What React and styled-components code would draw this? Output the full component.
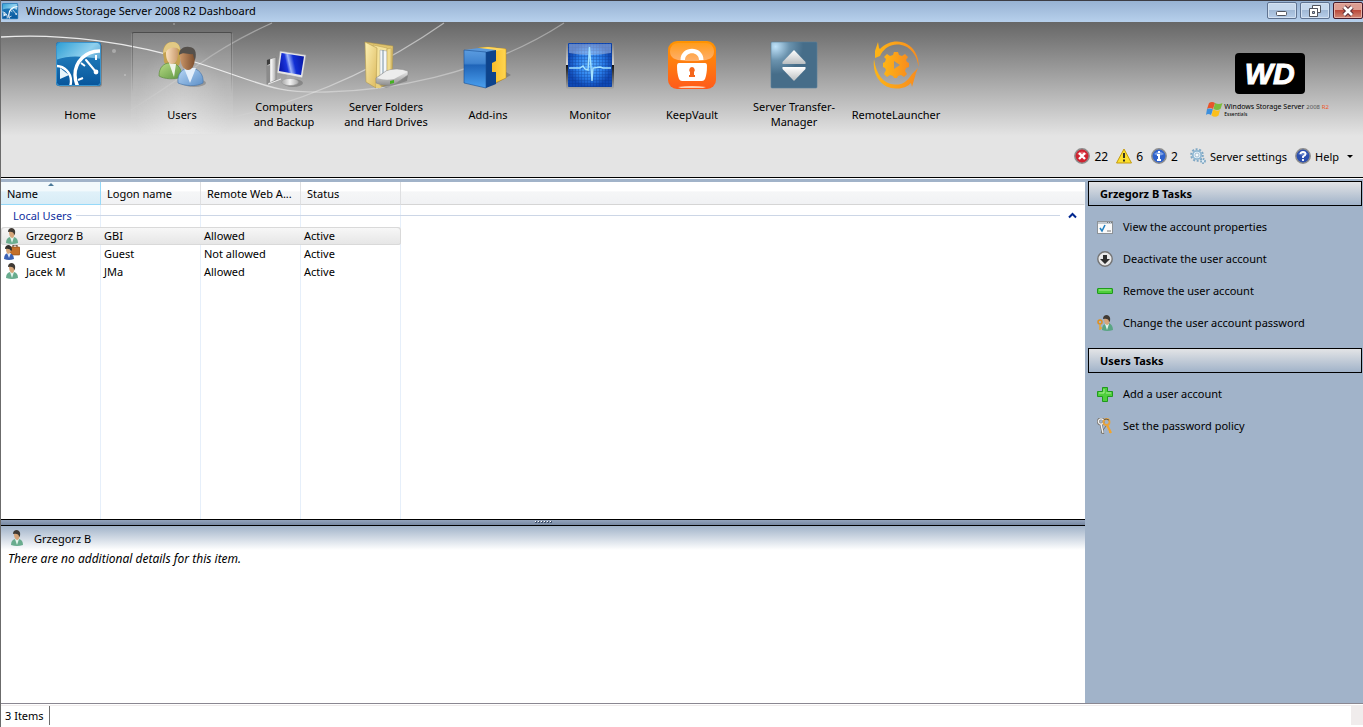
//dashboard
import React, { useState } from "react";
import styled, { createGlobalStyle, css } from "styled-components";

// Toolbar icons
const HomeIcon = () => (
  <svg viewBox="0 0 48 48" aria-hidden="true">
    <defs>
      <linearGradient id="homeTop" x1="0" y1="0" x2="1" y2="1">
        <stop offset="0" stopColor="#2f9fd4" />
        <stop offset="0.45" stopColor="#8fd0ee" />
        <stop offset="1" stopColor="#1c6fb0" />
      </linearGradient>
      <linearGradient id="homeLow" x1="0" y1="0" x2="0" y2="1">
        <stop offset="0" stopColor="#1e78b8" />
        <stop offset="1" stopColor="#06549a" />
      </linearGradient>
      <clipPath id="homeClip">
        <rect x="1" y="2" width="43" height="42" rx="2" />
      </clipPath>
    </defs>
    <rect x="2" y="3" width="44" height="43" rx="3" fill="#000" opacity="0.2" />
    <rect x="0" y="1" width="45" height="44" rx="3" fill="#1568ac" />
    <g clipPath="url(#homeClip)">
      <rect x="1" y="2" width="43" height="42" fill="url(#homeTop)" />
      <path d="M0 19C12 14 25 15 45 18V46H0Z" fill="url(#homeLow)" />
      <circle cx="43" cy="34" r="24" fill="none" stroke="#fff" strokeWidth="3.4" />
      <path d="M25 22l4 3M40 14v5M22 39l5-2" stroke="#fff" strokeWidth="2" />
      <path d="M30 19L40 31" stroke="#fff" strokeWidth="2" strokeLinecap="round" />
      <circle cx="40" cy="31" r="2.4" fill="#fff" />
      <circle cx="0" cy="40" r="15" fill="none" stroke="#fff" strokeWidth="2.4" />
      <path d="M4 27L13 34L4 38Z" fill="#e8f5fc" />
    </g>
    <rect x="0.5" y="1.5" width="44" height="43" rx="3" fill="none" stroke="#3b93cb" />
  </svg>
);

const UsersIcon = () => (
  <svg viewBox="0 0 48 48" aria-hidden="true">
    <defs>
      <linearGradient id="greenTop" x1="0" y1="0" x2="1" y2="1">
        <stop offset="0" stopColor="#b9dd86" />
        <stop offset="1" stopColor="#5d9440" />
      </linearGradient>
      <linearGradient id="blueTop" x1="0" y1="0" x2="1" y2="1">
        <stop offset="0" stopColor="#b9d8f6" />
        <stop offset="1" stopColor="#5c8fc8" />
      </linearGradient>
      <linearGradient id="fairSkin" x1="0" y1="0" x2="1" y2="0">
        <stop offset="0" stopColor="#fbe0bd" />
        <stop offset="1" stopColor="#c99b6e" />
      </linearGradient>
      <linearGradient id="darkSkin" x1="0" y1="0" x2="1" y2="0">
        <stop offset="0" stopColor="#c99568" />
        <stop offset="1" stopColor="#7a4c2c" />
      </linearGradient>
    </defs>
    <path d="M6 18C3 6 8 1 14 1C22 1 24 7 22 20Q22 25 19 25L9 24Q5 22 6 18Z" fill="#c4a14f" />
    <path d="M1 35C1 26 6 22 12 22C20 22 24 28 24 36C16 39 6 38 1 35Z" fill="url(#greenTop)" stroke="#5f8d40" strokeWidth="0.7" />
    <path d="M11 22L16 36L18 23Z" fill="#eef4e8" />
    <path d="M8 12C8 6 10 5 14 5C18 5 20 7 20 12C20 18 18 23 14 23C10 23 8 18 8 12Z" fill="url(#fairSkin)" />
    <path d="M5 12C6 4 10 1 15 1C19 1 22 4 22 9C17 5 11 6 8 11Z" fill="#e2c984" />
    <ellipse cx="36" cy="42" rx="12" ry="4" fill="#000" opacity="0.2" />
    <path d="M20 42C19 33 24 27 32 27C41 27 46 34 45 42C38 46 27 45 20 42Z" fill="url(#blueTop)" stroke="#4a78ac" strokeWidth="0.7" />
    <path d="M26 27L32 42L38 27Z" fill="#e4effa" />
    <path d="M22 15C22 9 26 7 31 7C36 7 38 11 37 18C36 25 34 29 30 29C25 29 22 22 22 15Z" fill="url(#darkSkin)" />
    <path d="M21 14C21 8 26 5 31 6C37 6 39 11 37 19Q36 18 35 13C30 14 26 10 21 14Z" fill="#55504b" />
  </svg>
);

const ComputersIcon = () => (
  <svg viewBox="0 0 48 48" aria-hidden="true">
    <defs>
      <linearGradient id="screenBlue" x1="0" y1="0.6" x2="1" y2="0.4">
        <stop offset="0" stopColor="#0917a8" />
        <stop offset="0.3" stopColor="#1a35dc" />
        <stop offset="0.42" stopColor="#9db4fa" />
        <stop offset="0.62" stopColor="#1230d4" />
        <stop offset="1" stopColor="#0818a5" />
      </linearGradient>
      <linearGradient id="pcGrey" x1="0" y1="0" x2="1" y2="0">
        <stop offset="0" stopColor="#a6a6a6" />
        <stop offset="0.5" stopColor="#f2f2f2" />
        <stop offset="1" stopColor="#a9a9a9" />
      </linearGradient>
    </defs>
    <path d="M7 19L16 16V39L7 43Z" fill="url(#pcGrey)" stroke="#777" strokeWidth="0.6" />
    <path d="M7 19L10 18V23L7 24Z" fill="#3c3c3c" />
    <path d="M7 25L10 24V41L7 43Z" fill="#8b8b8b" />
    <path d="M8 43L21 38" stroke="#eee" />
    <ellipse cx="33" cy="42" rx="10" ry="4" fill="#000" opacity="0.2" />
    <path d="M27 33L35 35L34 42H26Z" fill="#aaa" />
    <ellipse cx="30" cy="41" rx="8.5" ry="3.6" fill="url(#pcGrey)" stroke="#999" strokeWidth="0.6" />
    <path d="M20 10L46 14L42.5 37L17 32Z" fill="#e6e6e6" stroke="#999" strokeWidth="0.6" />
    <path d="M21.5 12L44 15.5L41 34L19 30Z" fill="url(#screenBlue)" />
  </svg>
);

const FoldersIcon = () => (
  <svg viewBox="0 0 48 48" aria-hidden="true">
    <defs>
      <linearGradient id="folderTan" x1="0" y1="0" x2="1" y2="1">
        <stop offset="0" stopColor="#fdf1b4" />
        <stop offset="1" stopColor="#dcb95d" />
      </linearGradient>
      <linearGradient id="driveGrey" x1="0" y1="0" x2="0" y2="1">
        <stop offset="0" stopColor="#f7f7f7" />
        <stop offset="1" stopColor="#8f8f8f" />
      </linearGradient>
    </defs>
    <path d="M3 1L31 5L30 42L16 47L13 40Z" fill="#e0c46e" stroke="#a98f45" strokeWidth="0.5" />
    <path d="M11 4L25 7V42L15 44Z" fill="#f6e39b" stroke="#b49a4e" strokeWidth="0.5" />
    <path d="M18 9L25 10V34L18 36Z" fill="#f4f7f9" stroke="#9aa0a5" strokeWidth="0.5" />
    <path d="M21 9V38" stroke="#77909f" strokeWidth="1" />
    <path d="M25 8L29 7V36L25 38Z" fill="#f1dc8d" stroke="#b49a4e" strokeWidth="0.5" />
    <path d="M3 1L15 7L14 47L4 41Z" fill="url(#folderTan)" stroke="#b49a4e" strokeWidth="0.6" />
    <path d="M14 47L19 47L18 40L14 39Z" fill="#e6ce7c" />
    <path d="M17 44L46 34L45 40L24 47Z" fill="#000" opacity="0.2" />
    <path d="M14 37L24 30Q35 26 46 30V34L33 43Q23 46 14 42Z" fill="url(#driveGrey)" stroke="#8a8a8a" strokeWidth="0.6" />
    <path d="M15 37L25 30Q35 27 45 31L32 38Q23 40 15 37Z" fill="#ededed" />
    <path d="M28 40L32 39V42L28 43Z" fill="#45b022" />
  </svg>
);

const AddinsIcon = () => (
  <svg viewBox="0 0 48 48" aria-hidden="true">
    <defs>
      <linearGradient id="cubeFront" x1="0" y1="0" x2="0" y2="1">
        <stop offset="0" stopColor="#5b9ce0" />
        <stop offset="0.35" stopColor="#3f83cf" />
        <stop offset="0.4" stopColor="#1f64b8" />
        <stop offset="1" stopColor="#4ba0ef" />
      </linearGradient>
      <linearGradient id="cubeGold" x1="0" y1="0" x2="1" y2="0">
        <stop offset="0" stopColor="#f2a400" />
        <stop offset="1" stopColor="#ffd651" />
      </linearGradient>
    </defs>
    <path d="M28 45L47 34L42 31Z" fill="#000" opacity="0.2" />
    <path d="M14 7L24 6L42 8V37L31 42L26 30Z" fill="url(#cubeGold)" stroke="#c58a08" strokeWidth="0.5" />
    <path d="M14 7L24 6L42 8L32 10Z" fill="#ffd75e" />
    <path d="M0 9L15 7L32 9L22 12Z" fill="#5b99dc" />
    <path d="M22 11L32 9V20L28 22V31L32 31V43L22 47Z" fill="#0d438c" />
    <path d="M0 9L22 11V47L0 42Z" fill="url(#cubeFront)" stroke="#174f93" strokeWidth="0.6" />
  </svg>
);

const MonitorIcon = () => (
  <svg viewBox="0 0 48 48" aria-hidden="true">
    <defs>
      <radialGradient id="scope">
        <stop offset="0" stopColor="#5cb2ff" />
        <stop offset="0.6" stopColor="#2a7eea" />
        <stop offset="1" stopColor="#0f48b4" />
      </radialGradient>
      <linearGradient id="scopeFrame" x1="0" y1="0" x2="0" y2="1">
        <stop offset="0" stopColor="#777" />
        <stop offset="0.5" stopColor="#d8d8d8" />
        <stop offset="0.5" stopColor="#111" />
        <stop offset="1" stopColor="#aaa" />
      </linearGradient>
      <pattern id="scopeGrid" width="3" height="3" patternUnits="userSpaceOnUse">
        <path d="M0 0H3M0 0V3" stroke="#0a2f80" strokeWidth="1" opacity="0.5" />
      </pattern>
    </defs>
    <rect width="48" height="48" rx="2" fill="url(#scopeFrame)" />
    <rect x="2" y="2" width="44" height="44" rx="1" fill="url(#scope)" />
    <rect x="2" y="2" width="44" height="44" fill="url(#scopeGrid)" />
    <path d="M3 3H45V12Q24 16 3 12Z" fill="#fff" opacity="0.35" />
    <path d="M3 27H14L17 25L19 28L22 29L23.500 6L26 40L27 27L34 26L37 27H45" fill="none" stroke="#a5e3ff" strokeWidth="1.4" />
  </svg>
);

const VaultIcon = () => (
  <svg viewBox="0 0 48 48" aria-hidden="true">
    <defs>
      <linearGradient id="vaultBg" x1="0" y1="0" x2="0" y2="1">
        <stop offset="0" stopColor="#ff9400" />
        <stop offset="0.5" stopColor="#ff7a10" />
        <stop offset="1" stopColor="#ff5a1a" />
      </linearGradient>
      <linearGradient id="vaultShine" x1="0" y1="0" x2="0" y2="1">
        <stop offset="0" stopColor="#fff" stopOpacity="0.1" />
        <stop offset="1" stopColor="#fff" stopOpacity="0.4" />
      </linearGradient>
    </defs>
    <rect width="48" height="48" rx="9" fill="url(#vaultBg)" />
    <path d="M2 10Q3 2 10 2H38Q45 2 46 10C46 18 40 20 24 20S2 18 2 10Z" fill="url(#vaultShine)" />
    <path d="M12.500 19C12.500 4 35.500 4 35.500 19H31C31 10 17 10 17 19Z" fill="#fff" />
    <path d="M11 22H37Q39 22 39 25Q39 33 37 38Q36 40 34 40H14Q12 40 11 38Q9 33 9 25Q9 22 11 22Z" fill="#fff" />
    <path d="M24 26A3 3 0 0 1 26 31V34H27V36H21V34H22V31A3 3 0 0 1 24 26Z" fill="#f4661c" />
    <path d="M10 46Q24 44 38 46L35 47H13Z" fill="#ffd0b0" />
  </svg>
);

const TransferIcon = () => (
  <svg viewBox="0 0 48 48" aria-hidden="true">
    <defs>
      <radialGradient id="transferBg" cx="0.1" cy="0.1" r="0.6">
        <stop offset="0" stopColor="#c0e3fa" />
        <stop offset="0.5" stopColor="#6b93ae" />
        <stop offset="1" stopColor="#466d89" />
      </radialGradient>
      <linearGradient id="arrowSilver" x1="0" y1="0" x2="0" y2="1">
        <stop offset="0" stopColor="#fff" />
        <stop offset="1" stopColor="#b9bec1" />
      </linearGradient>
    </defs>
    <rect x="1" y="1" width="46" height="46" rx="1" fill="url(#transferBg)" stroke="#57809c" strokeWidth="0.6" />
    <path d="M24 9L35.500 21V23H12.500V21Z" fill="url(#arrowSilver)" />
    <path d="M12.500 26H35.500V28L24 40L12.500 28Z" fill="url(#arrowSilver)" />
  </svg>
);

const RemoteIcon = () => (
  <svg viewBox="0 0 48 48" aria-hidden="true">
    <defs>
      <linearGradient id="remoteGold" x1="0" y1="0" x2="1" y2="0">
        <stop offset="0" stopColor="#feb515" />
        <stop offset="1" stopColor="#f88c1e" />
      </linearGradient>
    </defs>
    <g fill="url(#remoteGold)">
      <path d="M8 8C18 -3 36 -2 43 11C46 16 47 21 46.500 26C45 13 37 3.500 25 3.500C18 3.500 13 7 9 13L8 15L3 17L3 10L6 1L7 7Z" />
      <path d="M2 18C0 36 11 48 25 47.500C32 47.500 36 45 39 42L40 46L44 32L46 27L40 33C35 41 30 44 23 43.500C11 43 4 33 2 18Z" />
      <path
        fillRule="evenodd"
        d="M22 11H26L27 14L30 15L33 13L36 16L34 19L35 21L37 22V26L34 27L33 30L35 33L32 36L29 34L26 35L25 37H22L21 35L18 34L15 36L12 33L14 29L13 27L11 26V22L13 21L14 18L12 16L15 13L18 15L21 14ZM22 20V28L28 24Z"
      />
    </g>
  </svg>
);

// Small icons
const PersonIcon = () => (
  <svg viewBox="0 0 16 16" aria-hidden="true">
    <path d="M2 15Q2 10 6 9H10Q14 10 14 15Q8 17 2 15Z" fill="#69ac8e" />
    <path d="M6 9L8 15L10 9Z" fill="#e3f4ec" />
    <path d="M5 4Q5 1 8 1Q11 1 11 5Q10 10 8 10Q5 9 5 4Z" fill="#d6a67a" />
    <path d="M4 4Q4 0 8 0Q12 1 11 6L10 7Q10 3 4 4Z" fill="#3f3a35" />
  </svg>
);

const GuestIcon = () => (
  <svg viewBox="0 0 16 16" aria-hidden="true">
    <path d="M9 2V0H13V2" fill="none" stroke="#4b2b12" />
    <rect x="6" y="2" width="10" height="8" rx="1" fill="#c4702a" stroke="#8a4613" strokeWidth="0.6" />
    <path d="M0 14Q0 8 5 8Q10 9 10 14Q5 16 0 14Z" fill="#3b62b5" />
    <path d="M3 8L5 13L7 8Z" fill="#dfe8f8" />
    <path d="M2 4Q2 1 5 1Q8 2 7 6Q6 9 4 9Q2 8 2 4Z" fill="#d6a67a" />
    <path d="M1 4Q1 0 5 0Q8 1 8 5L7 6Q6 3 1 4Z" fill="#33302c" />
  </svg>
);

const KeyIcon = () => (
  <svg viewBox="0 0 16 16" aria-hidden="true">
    <path d="M4 6L6 16M6 13H4" stroke="#77736c" strokeWidth="2.600" fill="none" />
    <path d="M9 8L4 15" stroke="#77736c" strokeWidth="1" />
    <circle cx="4" cy="3.500" r="2.700" fill="none" stroke="#77736c" strokeWidth="2.600" />
    <circle cx="4" cy="3.500" r="2.600" fill="none" stroke="#f2f2f2" strokeWidth="1.400" />
    <path d="M4 6L6 15" stroke="#efefef" strokeWidth="1.400" fill="none" />
    <path d="M10 7L14 15M12 14H14" stroke="#f2a52c" strokeWidth="2.200" fill="none" />
    <circle cx="9.500" cy="4" r="3" fill="none" stroke="#e8a33b" strokeWidth="1.800" />
    <path d="M7 1.500Q9 0.500 12 2" fill="none" stroke="#5f5a50" />
  </svg>
);

const PasswordIcon = () => (
  <svg viewBox="0 0 16 16" aria-hidden="true">
    <path d="M5 15Q5 9 9 9L12 8Q16 10 16 15Q10 17 5 15Z" fill="#5aa584" />
    <path d="M8 9L10 15L12 9Z" fill="#e3f4ec" />
    <path d="M7 4Q7 1 10 1Q13 1 13 5Q12 10 10 10Q7 9 7 4Z" fill="#d6a67a" />
    <path d="M6 4Q6 0 10 0Q14 1 13 6L12 7Q12 3 6 4Z" fill="#3f3a35" />
    <circle cx="3" cy="7" r="2" fill="none" stroke="#e08f1e" strokeWidth="1.500" />
    <path d="M3 9V15M3 13H5" stroke="#e9a52e" strokeWidth="1.400" />
  </svg>
);

const PropertiesIcon = () => (
  <svg viewBox="0 0 16 16" aria-hidden="true">
    <rect x="0.500" y="2.500" width="15" height="12" fill="#fafafa" stroke="#8d9297" />
    <path d="M1 4H15" stroke="#c3cad0" strokeWidth="2" />
    <path d="M10 3.500H15" stroke="#6e7880" strokeDasharray="1 1" />
    <path d="M3 9L5 12L8 6" fill="none" stroke="#1f7fc0" strokeWidth="1.600" />
    <path d="M10 12H14" stroke="#777" />
  </svg>
);

const DeactivateIcon = () => (
  <svg viewBox="0 0 16 16" aria-hidden="true">
    <circle cx="8" cy="8" r="7.200" fill="#e9e9e9" stroke="#747474" strokeWidth="1.400" />
    <path d="M6 4H10V8H13L8 13L3 8H6Z" fill="#2d2d2d" />
  </svg>
);

const RemoveIcon = () => (
  <svg viewBox="0 0 16 16" aria-hidden="true">
    <rect x="0.500" y="5.500" width="15" height="5" rx="0.500" fill="#4fcf3c" stroke="#1f9a1c" />
    <path d="M2 7H14" stroke="#a9f093" />
  </svg>
);

const AddIcon = () => (
  <svg viewBox="0 0 16 16" aria-hidden="true">
    <path d="M5.500 1.500H10.500V5.500H15.500V10.500H10.500V15.500H5.500V10.500H0.500V5.500H5.500Z" fill="#4fcf3c" stroke="#1f9a1c" />
    <path d="M7 3V7H2M9 7H14" stroke="#a9f093" fill="none" />
  </svg>
);

const ErrorIcon = () => (
  <svg viewBox="0 0 16 16" aria-hidden="true">
    <circle cx="8" cy="8" r="7.200" fill="#cf2330" stroke="#8e8e8e" strokeWidth="1.500" />
    <path d="M3 6Q8 1 13 6Q8 9 3 6Z" fill="#f08a8e" opacity="0.6" />
    <path d="M5 5L11 11M11 5L5 11" stroke="#fff" strokeWidth="2.400" />
  </svg>
);

const WarningIcon = () => (
  <svg viewBox="0 0 16 16" aria-hidden="true">
    <path d="M8 1L15.500 15H0.500Z" fill="#fde02c" stroke="#c39a10" strokeLinejoin="round" />
    <path d="M8 5V10M8 11.500V13.500" stroke="#222" strokeWidth="1.800" />
  </svg>
);

const InfoIcon = () => (
  <svg viewBox="0 0 16 16" aria-hidden="true">
    <circle cx="8" cy="8" r="7.200" fill="#2f62cc" stroke="#8e8e8e" strokeWidth="1.500" />
    <path d="M3 6Q8 1 13 6Q8 9 3 6Z" fill="#9dbaf0" opacity="0.7" />
    <path d="M8 3V5M6 7H8V12M6 12H10" stroke="#fff" strokeWidth="2" fill="none" />
  </svg>
);

const GearIcon = () => (
  <svg viewBox="0 0 16 16" aria-hidden="true">
    <circle cx="7" cy="7" r="5.800" fill="none" stroke="#7ea7c4" strokeWidth="2" strokeDasharray="2 1.600" />
    <circle cx="7" cy="7" r="4.200" fill="#e6f2fa" stroke="#8fb7d2" strokeWidth="1.800" />
    <circle cx="7" cy="7" r="2" fill="#f5fafc" stroke="#7b9cb4" strokeWidth="0.600" />
    <circle cx="13" cy="13" r="2" fill="#e6f2fa" stroke="#7ea7c4" strokeWidth="1.800" strokeDasharray="1.400 0.700" />
  </svg>
);

const HelpIcon = () => (
  <svg viewBox="0 0 16 16" aria-hidden="true">
    <circle cx="8" cy="8" r="7.200" fill="#2c4fae" stroke="#8e8e8e" strokeWidth="1.500" />
    <path d="M3 6Q8 1 13 6Q8 9 3 6Z" fill="#8fa8e0" opacity="0.6" />
    <path d="M5.500 6Q5.500 4 8 4T10.500 6Q10.500 7.500 8 8.500V10M8 11V13" stroke="#fff" strokeWidth="1.800" fill="none" />
  </svg>
);

const WindowsFlag = () => (
  <svg width="17" height="16" viewBox="0 0 17 16" aria-hidden="true">
    <path d="M3 2Q6 0 9 2L7 8Q4 6 1 8Z" fill="#e8542a" />
    <path d="M9 2Q13 4 16.500 2L14.500 8Q11 10 7.500 8Z" fill="#7cbb3c" />
    <path d="M1 8Q4 7 7 8.500L5 14Q2 12 0 14Z" fill="#3d8fdc" />
    <path d="M7 8.500Q11 10.500 14 9L12.500 14.500Q9 17 5.500 14.500Z" fill="#fbbf1c" />
  </svg>
);

const Swoosh = () => (
  <SwooshArt width="600" height="155" viewBox="0 0 600 155" aria-hidden="true">
    <defs>
      <linearGradient id="rayOne" gradientUnits="userSpaceOnUse" x1="120" y1="0" x2="271" y2="0">
        <stop offset="0" stopColor="#fff" stopOpacity="0" />
        <stop offset="1" stopColor="#fff" stopOpacity="0.4" />
      </linearGradient>
      <linearGradient id="rayTwo" gradientUnits="userSpaceOnUse" x1="228" y1="0" x2="443" y2="0">
        <stop offset="0" stopColor="#fff" stopOpacity="0" />
        <stop offset="0.6" stopColor="#fff" stopOpacity="0.5" />
        <stop offset="1" stopColor="#fff" stopOpacity="0.5" />
      </linearGradient>
      <linearGradient id="wave" gradientUnits="userSpaceOnUse" x1="0" y1="0" x2="563" y2="0">
        <stop offset="0" stopColor="#fff" stopOpacity="0.85" />
        <stop offset="0.42" stopColor="#fff" stopOpacity="0.8" />
        <stop offset="0.55" stopColor="#fff" stopOpacity="0.35" />
        <stop offset="1" stopColor="#fff" stopOpacity="0.35" />
      </linearGradient>
    </defs>
    <g fill="none" strokeWidth="1.300">
      <path d="M0 15C60 11 130 20 197 41S270 71 325 70S480 55 563 1" stroke="url(#wave)" />
      <path d="M125 91Q165 66 197 43T271 1" stroke="url(#rayOne)" />
      <path d="M228 96C300 80 370 52 443 1" stroke="url(#rayTwo)" />
    </g>
    <g fill="#fff" opacity="0.3">
      <circle cx="113" cy="29" r="2" />
      <circle cx="173" cy="2" r="1" />
      <circle cx="124" cy="53" r="1" />
    </g>
  </SwooshArt>
);

const tabs = [
  { label: "Home", icon: HomeIcon },
  { label: "Users", icon: UsersIcon },
  { label: "Computers\nand Backup", icon: ComputersIcon },
  { label: "Server Folders\nand Hard Drives", icon: FoldersIcon },
  { label: "Add-ins", icon: AddinsIcon },
  { label: "Monitor", icon: MonitorIcon },
  { label: "KeepVault", icon: VaultIcon },
  { label: "Server Transfer-\nManager", icon: TransferIcon },
  { label: "RemoteLauncher", icon: RemoteIcon },
];

const users = [
  { name: "Grzegorz B", logon: "GBI", access: "Allowed", status: "Active", icon: PersonIcon },
  { name: "Guest", logon: "Guest", access: "Not allowed", status: "Active", icon: GuestIcon },
  { name: "Jacek M", logon: "JMa", access: "Allowed", status: "Active", icon: PersonIcon },
];

const accountTasks = [
  { label: "View the account properties", icon: PropertiesIcon },
  { label: "Deactivate the user account", icon: DeactivateIcon },
  { label: "Remove the user account", icon: RemoveIcon },
  { label: "Change the user account password", icon: PasswordIcon },
];

const usersTasks = [
  { label: "Add a user account", icon: AddIcon },
  { label: "Set the password policy", icon: KeyIcon },
];

function TaskGroup({ title, tasks }) {
  return (
    <section>
      <TaskTitle>{title}</TaskTitle>
      <TaskList>
        {tasks.map(({ label, icon: Icon }) => (
          <li key={label}>
            <TaskButton type="button">
              <SmallIcon>
                <Icon />
              </SmallIcon>
              <TaskLabel>{label}</TaskLabel>
            </TaskButton>
          </li>
        ))}
      </TaskList>
    </section>
  );
}

export default function App() {
  const [activeTab, setActiveTab] = useState("Users");
  const [selected, setSelected] = useState(0);
  const [open, setOpen] = useState(true);
  const current = users[selected];

  return (
    <Window>
      <GlobalStyle />
      <TitleBar>
        <TitleIcon>
          <HomeIcon />
        </TitleIcon>
        <Title>Windows Storage Server 2008 R2 Dashboard</Title>
        <WindowButtons>
          <WindowButton type="button" aria-label="Minimize">
            <svg width="14" height="12" viewBox="0 0 14 12">
              <rect x="1.500" y="6.500" width="10" height="4" rx="1" fill="#fff" stroke="#51555f" />
            </svg>
          </WindowButton>
          <WindowButton type="button" aria-label="Restore">
            <svg width="14" height="12" viewBox="0 0 14 12">
              <path d="M4.500 0.500H12.500V7.500H9.500V3.500H4.500Z" fill="#fff" stroke="#51555f" />
              <path d="M1.500 3.500H9.500V11.500H1.500ZM4.500 6.500V8.500H6.500V6.500Z" fill="#fff" fillRule="evenodd" stroke="#51555f" />
            </svg>
          </WindowButton>
          <WindowButton type="button" aria-label="Close" $close>
            <svg width="14" height="12" viewBox="0 0 14 12">
              <path d="M3 2L11 10M11 2L3 10" stroke="#5b2b33" strokeWidth="4.600" />
              <path d="M3 2L11 10M11 2L3 10" stroke="#fff" strokeWidth="2.600" />
            </svg>
          </WindowButton>
        </WindowButtons>
      </TitleBar>

      <Header>
        <Swoosh />
        <TopRow>
          <Tabs>
            {tabs.map(({ label, icon: Icon }) => (
              <Tab
                key={label}
                type="button"
                $active={label === activeTab}
                onClick={() => setActiveTab(label)}
              >
                <TabIcon>
                  <Icon />
                </TabIcon>
                <TabLabel>{label}</TabLabel>
              </Tab>
            ))}
          </Tabs>
          <Brand>
            <WdLogo>WD</WdLogo>
            <Product>
              <WindowsFlag />
              <div>
                <ProductName>
                  Windows Storage Server <small>2008</small> <em>R2</em>
                </ProductName>
                <Edition>Essentials</Edition>
              </div>
            </Product>
          </Brand>
        </TopRow>
        <Alerts>
          <AlertGroup>
            <AlertButton type="button" aria-label="Errors: 22">
              <SmallIcon><ErrorIcon /></SmallIcon>22
            </AlertButton>
            <AlertButton type="button" aria-label="Warnings: 6">
              <SmallIcon><WarningIcon /></SmallIcon>6
            </AlertButton>
            <AlertButton type="button" aria-label="Information: 2">
              <SmallIcon><InfoIcon /></SmallIcon>2
            </AlertButton>
          </AlertGroup>
          <AlertButton type="button">
            <SmallIcon><GearIcon /></SmallIcon>Server settings
          </AlertButton>
          <AlertButton type="button">
            <SmallIcon><HelpIcon /></SmallIcon>Help
            <Caret />
          </AlertButton>
        </Alerts>
      </Header>

      <Main>
        <Content>
          <ListPane>
            <UserTable>
              <colgroup>
                <col className="data" />
                <col className="data" />
                <col className="data" />
                <col className="data" />
                <col />
              </colgroup>
              <thead>
                <tr>
                  <HeadCell $sorted aria-sort="ascending">Name</HeadCell>
                  <HeadCell>Logon name</HeadCell>
                  <HeadCell>Remote Web A...</HeadCell>
                  <HeadCell>Status</HeadCell>
                  <HeadCell as="td" $last />
                </tr>
              </thead>
              <tbody>
                <tr>
                  <GroupCell colSpan={5}>
                    <GroupButton type="button" aria-expanded={open} onClick={() => setOpen(!open)}>
                      Local Users
                      <GroupLine />
                      <svg width="9" height="7" viewBox="0 0 9 7" aria-hidden="true">
                        <path d="M1 5.500L4.500 2L8 5.500" fill="none" stroke="#00268f" strokeWidth="2" />
                      </svg>
                    </GroupButton>
                  </GroupCell>
                </tr>
                {open &&
                  users.map(({ name, logon, access, status, icon: Icon }, i) => (
                    <UserRow key={name} $selected={i === selected} onClick={() => setSelected(i)}>
                      <td>
                        <NameCell>
                          <SmallIcon>
                            <Icon />
                          </SmallIcon>
                          {name}
                        </NameCell>
                      </td>
                      <td>{logon}</td>
                      <td>{access}</td>
                      <td>{status}</td>
                    </UserRow>
                  ))}
              </tbody>
            </UserTable>
          </ListPane>
          <Splitter>
            <i /><i /><i /><i /><i /><i />
          </Splitter>
          <Details>
            <DetailsTitle>
              <SmallIcon>
                <PersonIcon />
              </SmallIcon>
              {current.name}
            </DetailsTitle>
            <DetailsText>There are no additional details for this item.</DetailsText>
          </Details>
        </Content>
        <Sidebar>
          <TaskGroup title={`${current.name} Tasks`} tasks={accountTasks} />
          <TaskGroup title="Users Tasks" tasks={usersTasks} />
        </Sidebar>
      </Main>

      <StatusBar>
        <StatusText>{users.length} Items</StatusText>
        <Grip />
      </StatusBar>
    </Window>
  );
}

// Styles
const GlobalStyle = createGlobalStyle`
  * {
    box-sizing: border-box;
  }

  body {
    margin: 0;
    background: #fff;
    color: #000;
    font-family: "Noto Sans", "Open Sans", sans-serif;
    font-size: 11px;
    line-height: 15px;
  }

  button {
    padding: 0;
    border: none;
    background: none;
    color: inherit;
    font: inherit;
    cursor: pointer;
  }
`;

const Window = styled.div`
  display: flex;
  flex-direction: column;
  min-height: 100vh;
  border-left: 1px solid #6b6b6b;
`;

const TitleBar = styled.div`
  display: flex;
  align-items: center;
  height: 22px;
  padding-left: 1px;
  border-top: 1px solid #3c3c44;
  background: linear-gradient(#97b2d3, #b7d0ec);
`;

const TitleIcon = styled.span`
  display: flex;
  width: 17px;
  height: 17px;

  svg {
    width: 100%;
    height: 100%;
  }
`;

const Title = styled.h1`
  flex: 1;
  margin: 0 0 0 7px;
  padding-bottom: 2px;
  font-size: 11px;
  font-weight: 400;
`;

const WindowButtons = styled.div`
  display: flex;
  align-self: flex-start;
  gap: 3px;
  padding-top: 1px;
`;

const WindowButton = styled.button`
  display: flex;
  align-items: center;
  justify-content: center;
  width: 30px;
  height: 17px;
  border: 1px solid #5f7391;
  border-radius: 2px;
  background: linear-gradient(#c5d7ec 45%, #a1b9d6 50%, #b7cee9);
  box-shadow: inset 0 0 0 1px #d3e1f1;

  ${({ $close }) =>
    $close &&
    css`
      border-color: #471b2b;
      background: linear-gradient(#dd9d92 45%, #bb4a3b 50%, #d18876);
      box-shadow: inset 0 0 0 1px #e6b0a5;
    `}
`;

const Header = styled.header`
  position: relative;
  display: flex;
  flex-direction: column;
  height: 156px;
  border-bottom: 1px solid #000;
  background: linear-gradient(#676767, #7c7c7c 20px, #e4e4e4 114px);
`;

const SwooshArt = styled.svg`
  position: absolute;
  top: 0;
  left: 0;
  pointer-events: none;
`;

const TopRow = styled.div`
  position: relative;
  display: flex;
  justify-content: space-between;
  padding: 10px 34px 0 28px;
`;

const Tabs = styled.nav`
  display: flex;
`;

const Tab = styled.button`
  display: flex;
  flex-direction: column;
  align-items: center;
  width: 102px;
  height: 102px;
  padding-top: 8px;
  border: 1px solid transparent;
  border-bottom: none;
  border-radius: 3px;

  ${({ $active }) =>
    $active &&
    css`
      border-top-color: #4d4d4d;
      background:
        linear-gradient(#666, transparent 60%) left / 1px 100% no-repeat,
        linear-gradient(#666, transparent 60%) right / 1px 100% no-repeat,
        radial-gradient(ellipse at 50% 80%, rgba(255, 255, 255, 0.3), transparent 65%),
        linear-gradient(rgba(255, 255, 255, 0.12), rgba(255, 255, 255, 0.12) 50%, transparent);
    `}
`;

const TabIcon = styled.span`
  width: 48px;
  height: 48px;

  svg {
    display: block;
    overflow: visible;
  }
`;

const TabLabel = styled.span`
  display: flex;
  align-items: center;
  height: 30px;
  margin-top: 10px;
  white-space: pre;
`;

const Brand = styled.div`
  display: flex;
  flex-direction: column;
  align-items: center;
  padding-top: 21px;
`;

const WdLogo = styled.div`
  width: 70px;
  height: 41px;
  margin-left: 4px;
  border-radius: 4px;
  background: #000;
  color: #fff;
  font: italic bold 30px/41px "Liberation Sans", Arial, sans-serif;
  -webkit-text-stroke: 1px #fff;
  text-align: center;
`;

const Product = styled.div`
  display: flex;
  align-items: flex-start;
  gap: 1px;
  margin-top: 7px;
`;

const ProductName = styled.div`
  padding-top: 2px;
  font-size: 7px;
  line-height: 8px;
  white-space: nowrap;

  small {
    color: #555;
    font-size: 6px;
  }

  em {
    color: #f0572a;
    font-size: 6px;
    font-style: normal;
  }
`;

const Edition = styled.div`
  font-size: 5px;
  line-height: 6px;
`;

const Alerts = styled.div`
  position: relative;
  display: flex;
  justify-content: flex-end;
  gap: 8px;
  margin-top: 14px;
  padding-right: 10px;
`;

const AlertGroup = styled.div`
  display: flex;
  gap: 8px;
  margin-right: 4px;
  font-size: 12px;
`;

const AlertButton = styled.button`
  display: flex;
  align-items: center;
  gap: 4px;
  height: 16px;
`;

const Caret = styled.span`
  margin-left: 4px;
  border: 3px solid transparent;
  border-top-color: #000;
  border-bottom: none;
`;

const SmallIcon = styled.span`
  flex: none;
  width: 16px;
  height: 16px;

  svg {
    display: block;
    width: 16px;
    height: 16px;
  }
`;

const Main = styled.main`
  display: flex;
  flex: 1;
  margin-top: 1px;
  background: #a1b3c9;
`;

const Content = styled.div`
  display: flex;
  flex: 1;
  flex-direction: column;
  min-width: 0;
  padding-top: 3px;
`;

const ListPane = styled.div`
  flex: 1;
  background:
    linear-gradient(#e6effa, #e6effa) 99px 0 / 1px 100% no-repeat,
    linear-gradient(#e6effa, #e6effa) 199px 0 / 1px 100% no-repeat,
    linear-gradient(#e6effa, #e6effa) 299px 0 / 1px 100% no-repeat,
    linear-gradient(#e6effa, #e6effa) 399px 0 / 1px 100% no-repeat,
    #fff;
`;

const UserTable = styled.table`
  width: 100%;
  table-layout: fixed;
  border-collapse: separate;
  border-spacing: 0;

  col.data {
    width: 100px;
  }

  th,
  td {
    padding: 0 0 0 3px;
    text-align: left;
    font-weight: 400;
    white-space: nowrap;
  }
`;

const HeadCell = styled.th`
  && {
    height: 23px;
    padding: 0 0 0 6px;
    border-right: 1px solid ${({ $last }) => ($last ? "transparent" : "#dedfe1")};
    border-bottom: 1px solid #d5d5d5;
    background: linear-gradient(#fff 40%, #f5f6f7 45%, #f1f2f4);
  }

  ${({ $sorted }) =>
    $sorted &&
    css`
      && {
        position: relative;
        border-right-color: #96d9f9;
        border-bottom-color: #96d9f9;
        background: linear-gradient(#f2f9fc 40%, #e0f1f9 45%, #d8ecf6);
      }

      &::after {
        content: "";
        position: absolute;
        top: 1px;
        left: calc(50% - 3px);
        border: 3px solid transparent;
        border-top: none;
        border-bottom-color: #4d7a99;
      }
    `}
`;

const GroupCell = styled.td`
  height: 22px;
`;

const GroupButton = styled.button`
  display: flex;
  align-items: center;
  width: 100%;
  padding: 0 8px 2px 9px;
  color: #0f2fa0;
`;

const GroupLine = styled.span`
  flex: 1;
  height: 1px;
  margin: 0 8px 0 4px;
  background: #ccd6e6;
`;

const UserRow = styled.tr`
  && td {
    height: 18px;
    padding-bottom: 2px;
  }

  ${({ $selected }) =>
    $selected &&
    css`
      && td {
        padding-bottom: 1px;
        background: linear-gradient(#f8f8f8, #e5e5e5);
        box-shadow: inset 0 1px #d9d9d9, inset 0 -1px #d9d9d9;
      }

      && td:first-child {
        border-radius: 3px 0 0 3px;
        box-shadow: inset 1px 1px #d9d9d9, inset 0 -1px #d9d9d9;
      }

      && td:last-child {
        border-radius: 0 3px 3px 0;
        box-shadow: inset -1px 1px #d9d9d9, inset 0 -1px #d9d9d9;
      }
    `}
`;

const NameCell = styled.span`
  display: flex;
  align-items: center;
  gap: 6px;
  height: 16px;
`;

const Splitter = styled.div`
  display: flex;
  align-items: flex-start;
  justify-content: center;
  gap: 1px;
  height: 7px;
  padding-top: 1px;
  border: solid #000;
  border-width: 1px 0;
  background: linear-gradient(#93a3bb, #7889a3);

  i {
    width: 2px;
    height: 2px;
    border: 1px solid #44546e;
    border-width: 0 1px 1px 0;
    background: #fff;
  }
`;

const Details = styled.section`
  height: 177px;
  background: linear-gradient(#a1b3c9, #fff 24px);
`;

const DetailsTitle = styled.h2`
  display: flex;
  align-items: center;
  gap: 9px;
  height: 24px;
  margin: 0;
  padding-left: 8px;
  font-size: 11px;
  font-weight: 400;
`;

const DetailsText = styled.p`
  margin: 1px 0 0 7px;
  font-size: 12px;
  font-style: italic;
`;

const Sidebar = styled.aside`
  width: 278px;
  padding: 2px 1px 0 3px;
`;

const TaskTitle = styled.h2`
  display: flex;
  align-items: center;
  height: 25px;
  margin: 0;
  padding-left: 11px;
  border: 1px solid #000;
  background: linear-gradient(#e3e4e6, #a1b3c9);
  font-size: 11px;
  font-weight: 700;
`;

const TaskList = styled.ul`
  margin: 0;
  padding: 5px 0 9px 9px;
  list-style: none;
`;

const TaskButton = styled.button`
  display: flex;
  align-items: center;
  gap: 10px;
  height: 32px;
`;

const TaskLabel = styled.span`
  padding-bottom: 2px;
`;

const StatusBar = styled.footer`
  display: flex;
  justify-content: space-between;
  height: 24px;
  padding: 2px 0 2px 4px;
  border-top: 1px solid #8a8791;
  background: linear-gradient(transparent 1px, #f0ecec 1px, #f0ecec 2px, #fff 2px);
`;

const StatusText = styled.span`
  padding-right: 5px;
  border-right: 1px solid #6d6d6d;
  line-height: 19px;
`;

const Grip = styled.span`
  width: 12px;
  background: #f0ecec;
`;
